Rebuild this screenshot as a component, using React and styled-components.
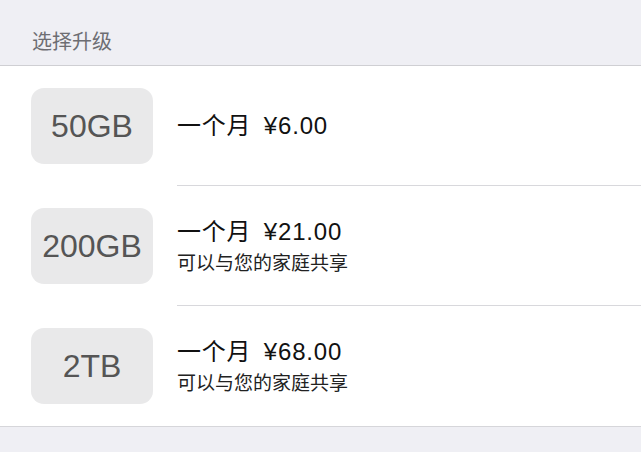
import React from "react";
import styled, { createGlobalStyle } from "styled-components";

const GlobalStyle = createGlobalStyle`
  html, body {
    margin: 0;
    padding: 0;
    background: #efeff4;
    font-family: "Liberation Sans", "Noto Sans CJK SC", sans-serif;
  }
`;

const Page = styled.div`
  width: 641px;
  height: 452px;
  background: #efeff4;
  overflow: hidden;
`;

const SectionHeader = styled.div`
  height: 66px;
  box-sizing: border-box;
  padding: 29px 0 0 32px;
  font-size: 20px;
  line-height: 26px;
  color: #6d6d72;
  border-bottom: 1px solid #cfcfd3;
`;

const List = styled.ul`
  list-style: none;
  margin: 0;
  padding: 0;
  background: #fff;
  border-bottom: 1px solid #d6d6da;
`;

const Row = styled.li`
  display: flex;
  align-items: center;
  height: 120px;
  padding-left: 31px;
  box-sizing: border-box;
`;

const Badge = styled.div`
  flex: none;
  width: 122px;
  height: 76px;
  border-radius: 13px;
  background: #e9e9ea;
  color: #555;
  font-size: 32px;
  display: flex;
  align-items: center;
  justify-content: center;
`;

const Details = styled.div`
  flex: 1;
  align-self: stretch;
  margin-left: 24px;
  display: flex;
  flex-direction: column;
  justify-content: center;
  border-bottom: ${({ $last }) => ($last ? "none" : "1px solid #d8d8dc")};
`;

const Price = styled.div`
  font-size: 24px;
  letter-spacing: 0.8px;
  word-spacing: 5px;
  color: #111;
  line-height: 30px;
`;

const Note = styled.div`
  margin-top: 6px;
  font-size: 19px;
  color: #222;
  line-height: 22px;
`;

const plans = [
  { size: "50GB", price: "一个月 ¥6.00" },
  { size: "200GB", price: "一个月 ¥21.00", note: "可以与您的家庭共享" },
  { size: "2TB", price: "一个月 ¥68.00", note: "可以与您的家庭共享" },
];

export default function App() {
  return (
    <Page>
      <GlobalStyle />
      <SectionHeader>选择升级</SectionHeader>
      <List>
        {plans.map((p, i) => (
          <Row key={p.size}>
            <Badge>{p.size}</Badge>
            <Details $last={i === plans.length - 1}>
              <Price>{p.price}</Price>
              {p.note && <Note>{p.note}</Note>}
            </Details>
          </Row>
        ))}
      </List>
    </Page>
  );
}
